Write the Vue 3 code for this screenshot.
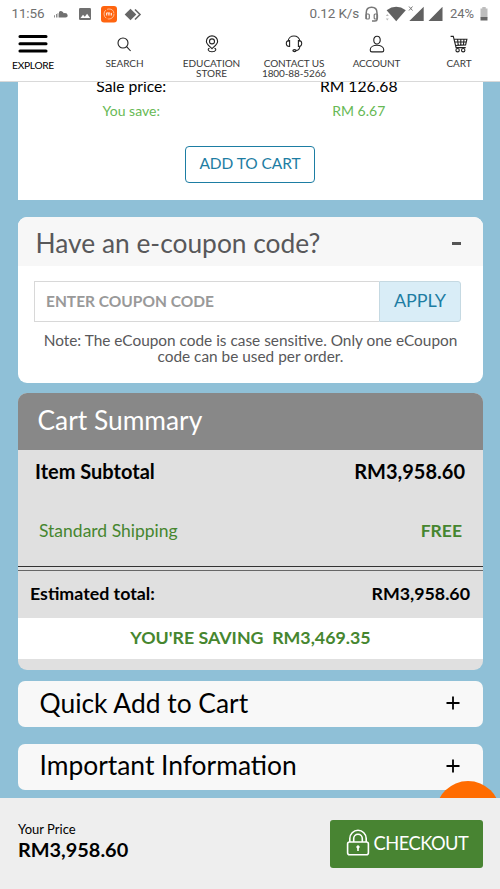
<script setup>
const panels = ['Quick Add to Cart', 'Important Information']
</script>

<template>
  <div class="page">
    <header class="top">
      <div class="status">
        <span class="clock">11:56</span>
        <svg class="left-icons" width="90" height="18" viewBox="53 4 90 18">
          <path d="M54 16.4v-2.2h.8v2.2zM56 16.5v-3.6h.8v3.6zM57.6 16.5v-4.3h.8v4.3zM59 16.5V11q1-1.3 2.7-.8 1.5.3 2 2 3.5-.6 4 2 .2 2.3-2.2 2.3z" fill="#707070" />
          <rect x="79" y="7" width="12" height="12" rx="1.3" fill="#707070" />
          <path d="M80.500 17l2.500-3.200 1.800 2 2.300-3 3 4.200z" fill="#fff" />
          <rect x="101" y="5" width="16" height="16.500" rx="3" fill="#ff640f" />
          <circle cx="109" cy="13" r="5" fill="none" stroke="#ffd2b3" stroke-width=".8" stroke-dasharray="9 1.5" />
          <path d="M106.500 14.500v-2.600h1.800v2.600m0-2.600h1.600v2.600m1.600-2.600v2.600" fill="none" stroke="#fff" stroke-width=".8" />
          <path d="M130.500 7.700l5.800 5.800-5.800 5.800-5.800-5.800z" fill="#666" />
          <path d="M135 8.500l5 5-5 5" fill="none" stroke="#666" stroke-width="1.600" />
        </svg>
        <span class="speed">0.12 K/s</span>
        <svg class="right-icons" width="82" height="22" viewBox="364 2 82 22">
          <path d="M366.200 18v-6q0-5.700 5.400-5.700t5.400 5.700v6.800q0 1.200-2 1.200h-3" fill="none" stroke="#777" stroke-width="1.500" />
          <rect x="366" y="13" width="3.300" height="5" rx="1" fill="none" stroke="#777" stroke-width="1.200" />
          <rect x="374.200" y="13" width="3.300" height="5" rx="1" fill="none" stroke="#777" stroke-width="1.200" />
          <path d="M386.600 9.200q9.600-6.800 19.200 0L396.200 20.300z" fill="#616161" />
          <path d="M385.800 15l1.500-2 1.500 2zM385.800 17.500l1.500 2 1.500-2z" fill="#bbb" />
          <path d="M409 5.500l3.500 4M412.500 5.500l-3.500 4" stroke="#777" stroke-width="1" />
          <path d="M409.300 20L423.700 5.800V20zM428.500 20L442.500 5.800V20z" fill="#616161" />
        </svg>
        <span class="battery-text">24%</span>
        <svg class="battery" width="8" height="14" viewBox="0 0 8 14">
          <path d="M.5 1.500H2.300V0h3.400v1.500h1.800v9H.5z" fill="#bdbdbd" />
          <path d="M.5 10h7v3.500H.5z" fill="#666" />
        </svg>
      </div>
      <nav class="nav">
        <a class="item explore">
          <svg width="30" height="20" viewBox="0 0 30 20"><path d="M2 2.500h26M2 9.800h26M2 17h26" stroke="#000" stroke-width="3.100" stroke-linecap="round" /></svg>
          <span>EXPLORE</span>
        </a>
        <a class="item">
          <svg width="18" height="18" viewBox="0 0 18 18" class="line"><circle cx="7" cy="8" r="5" /><path d="M10.600 11.700l4 4.300" /></svg>
          <span>SEARCH</span>
        </a>
        <a class="item">
          <svg width="18" height="18" viewBox="0 0 18 18" class="line"><path d="M9 13.700C6 10.700 3.400 9 3.400 6.400a5.600 5.500 0 0 1 11.200 0C14.600 9 12 10.700 9 13.700z" /><circle cx="9" cy="6.400" r="2.500" /><path d="M6.500 13.200c-2 .5-2 3.500 2.500 3.500s4.500-3 2.500-3.500" /></svg>
          <span>EDUCATION<br>STORE</span>
        </a>
        <a class="item">
          <svg width="18" height="18" viewBox="0 0 18 18" class="line"><path d="M3.200 6.300C3.200-.700 14.800-.700 14.800 6.300M14.800 11q0 4.500-4 4.500" /><path d="M4.600 5.600v5.800Q1.300 11.500 1.300 8.500T4.600 5.600zM13.400 5.600v5.800q3.300.1 3.300-2.900T13.400 5.600z" /><ellipse cx="9.500" cy="15.600" rx="1.600" ry="1" /></svg>
          <span class="contact">CONTACT US<br>1800-88-5266</span>
        </a>
        <a class="item">
          <svg width="18" height="18" viewBox="0 0 18 18" class="line"><path d="M9 1.200c4.300 0 4.300 7.800 0 7.800s-4.300-7.800 0-7.800zM2.200 14.900c0-6.300 13.600-6.300 13.600 0q0 2-1.700 2H3.900q-1.700 0-1.700-2z" /></svg>
          <span class="contact">ACCOUNT</span>
        </a>
        <a class="item">
          <svg width="18" height="18" viewBox="0 0 18 18" class="line"><path d="M.600 1.400h2.700l2.800 11.200h9.600M3.900 4.200h13L15.600 9.900l-10.100.6M4.600 7h11.600M7.600 4.200l.6 6M10.800 4.200v6M14 4.200l-.6 6" /><circle cx="7.600" cy="15.200" r="1.700" /><circle cx="13.200" cy="15.200" r="1.700" /></svg>
          <span>CART</span>
        </a>
      </nav>
    </header>

    <main class="body">
      <section class="product">
        <div class="prices sale"><span>Sale price:</span><span>RM 126.68</span></div>
        <div class="prices save"><span>You save:</span><span>RM 6.67</span></div>
        <button class="add">ADD TO CART</button>
      </section>

      <section class="coupon">
        <h2><span>Have an e-coupon code?</span><i class="minus"></i></h2>
        <div class="field">
          <span class="placeholder">ENTER COUPON CODE</span>
          <button class="apply">APPLY</button>
        </div>
        <p><span>Note: The eCoupon code is case sensitive. Only one eCoupon</span><br><span>code can be used per order.</span></p>
      </section>

      <section class="summary">
        <h2>Cart Summary</h2>
        <div class="row subtotal"><b>Item Subtotal</b><b>RM3,958.60</b></div>
        <div class="row shipping"><span>Standard Shipping</span><b>FREE</b></div>
        <div class="rule"></div>
        <div class="row total"><b>Estimated total:</b><b>RM3,958.60</b></div>
        <div class="saving">YOU'RE SAVING&nbsp; RM3,469.35</div>
      </section>

      <section v-for="(panel, i) in panels" :key="panel" class="panel" :class="'panel-' + i">
        <span>{{ panel }}</span>
        <svg width="14" height="14" viewBox="0 0 14 14"><path d="M.500 7h13M7 .500v13" stroke="#000" stroke-width="1.800" /></svg>
      </section>
      <div class="bubble"></div>
    </main>

    <footer class="footer">
      <div class="price"><span>Your Price</span><b>RM3,958.60</b></div>
      <button class="checkout">
        <svg width="24" height="27" viewBox="0 0 24 27" fill="none" stroke="#fff" stroke-width="1.600">
          <rect x="1.600" y="13" width="20.800" height="12.800" rx="2" />
          <path d="M3.800 13V9.500a8.200 8.200 0 0 1 16.400 0V13M7.700 13V9.500a4.300 4.300 0 0 1 8.600 0V13" />
          <circle cx="12" cy="18" r="1.200" fill="#fff" stroke-width="1" /><path d="M12 18v4" />
        </svg>
        <span>CHECKOUT</span>
      </button>
    </footer>
  </div>
</template>

<style>
body { margin: 0; overflow: hidden; }
</style>

<style scoped>
* { box-sizing: border-box; }
.page { width: 500px; height: 889px; display: flex; flex-direction: column; overflow: hidden; background: #8fc0d7; font-family: Lato, "Liberation Sans", sans-serif; color: #000; }
button { font-family: inherit; margin: 0; padding: 0; }
h2, p { margin: 0; font-weight: 400; }
svg { display: block; flex: none; }
span, b { white-space: nowrap; }
b { font-weight: 700; }
.top { height: 82px; flex: none; background: #fff; border-bottom: 1.500px solid #d9d9d9; }
.status { height: 27px; display: flex; align-items: center; padding-left: 11.500px; font: 13.500px/27px Roboto, sans-serif; color: #6f6f6f; }
.clock { width: 41.500px; letter-spacing: -.15px; }
.left-icons { margin-right: 166.500px; }
.speed { width: 54.500px; letter-spacing: -.15px; }
.battery-text { margin-left: 4px; width: 30px; font-size: 13px; }
.battery { margin-top: 1px; }
.nav { display: grid; grid-template-columns: 82px 85px 89px 76px 89px 76px; height: 54px; }
.item { display: flex; flex-direction: column; align-items: center; padding-top: 8px; font-size: 10px; line-height: 10px; letter-spacing: -.05px; color: #3a3a3a; text-align: center; }
.item span { margin-top: 5px; }
.item .contact { margin-top: 5px; letter-spacing: -.12px; }
.explore { width: 66px; padding-top: 7px; color: #000; font-size: 10.200px; letter-spacing: -.3px; }
.item.explore span { margin-top: 6px; }
.line { fill: none; stroke: #222; stroke-width: 1.100; }
.body { height: 716px; flex: none; padding: 0 17px 0 18px; position: relative; overflow: hidden; }
.product { height: 117.500px; background: #fff; overflow: hidden; display: flex; flex-direction: column; align-items: center; }
.prices { display: grid; grid-template-columns: 1fr 1fr; width: 455px; margin-right: 11px; text-align: center; height: 24px; line-height: 24px; flex: none; }
.sale { margin-top: -8px; font-size: 15.700px; }
.save { font-size: 14px; line-height: 25px; color: #67b955; }
.add { margin: 24px 1px 0 0; width: 130px; height: 37px; border: 1px solid #1d7da3; border-radius: 4px; background: #fff; color: #1d7da3; font-size: 15.500px; line-height: 32px; padding-bottom: 3px; letter-spacing: -.08px; }
.coupon { margin-top: 17px; height: 166px; background: #fff; border-radius: 9px; overflow: hidden; }
.coupon h2 { display: flex; justify-content: space-between; align-items: center; height: 49.500px; padding: 4px 22px 0 17.500px; background: #f7f7f7; color: #58585a; font-size: 26.350px; }
.minus { width: 9px; height: 3px; background: #555; margin-top: 1px; }
.field { display: flex; margin: 15px 0 0 16px; width: 427px; height: 41px; }
.placeholder { flex: 1; border: 1px solid #d8d8d8; border-right: 0; padding-left: 11px; line-height: 38px; font-size: 15.500px; font-weight: 700; color: #999; }
.apply { width: 82px; border: 1px solid #c5d9e2; border-radius: 0 3px 3px 0; background: #d9edf7; color: #1d7da3; font-size: 18px; line-height: 36px; padding-bottom: 3px; letter-spacing: -.15px; }
.coupon p { margin-top: 10px; text-align: center; font-size: 15.380px; line-height: 16px; color: #58585a; }
.summary { margin-top: 10.500px; height: 277px; border-radius: 9px; overflow: hidden; background: #e0e0e0; }
.summary h2 { height: 56.500px; background: #888; color: #fff; padding-left: 19.500px; font-size: 26.350px; line-height: 55px; }
.row { display: flex; justify-content: space-between; }
.subtotal { height: 44px; line-height: 43px; font-size: 20px; padding: 0 18px 0 17px; }
.shipping { height: 72.500px; line-height: 73px; font-size: 17.500px; padding: 0 21px; color: #46862f; }
.rule { height: 5px; border-top: 1px solid #333; border-bottom: 1.500px solid #666; }
.total { height: 46.500px; line-height: 45px; font-size: 17.800px; padding: 0 13px 0 12px; }
.saving { height: 41.500px; line-height: 38px; background: #fff; text-align: center; color: #46862f; font-size: 17.800px; font-weight: 700; }
.panel { margin-top: 11px; height: 46px; border-radius: 7px; background: #f8f8f8; display: flex; align-items: center; justify-content: space-between; padding: 0 23px 3px 21.500px; font-size: 26.400px; }
.panel svg { margin-top: 1px; }
.panel-1 { margin-top: 16.500px; }
.bubble { position: absolute; left: 435.500px; top: 698.500px; width: 64px; height: 64px; border-radius: 50%; background: #ff6c00; }
.footer { flex: 1; background: #eee; display: flex; justify-content: space-between; align-items: flex-start; padding: 22px 17px 0 18px; }
.price { display: flex; flex-direction: column; }
.price span { font-size: 13px; line-height: 19px; }
.price b { font-size: 19.900px; line-height: 20px; }
.checkout { width: 153.500px; height: 48px; border: 0; border-radius: 3px; background: #488432; color: #fff; display: flex; align-items: center; padding: 0 0 3px 16px; gap: 4px; font-size: 18.300px; letter-spacing: -.5px; }
</style>
